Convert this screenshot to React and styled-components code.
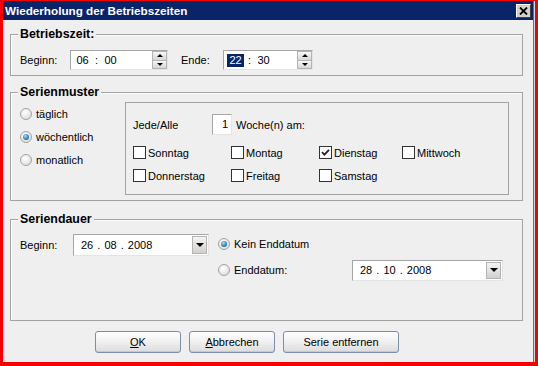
import React from "react";
import styled, { createGlobalStyle, css } from "styled-components";

const GlobalStyle = createGlobalStyle`
  html, body {
    margin: 0;
    padding: 0;
    background: #f40000;
  }
  body {
    width: 538px;
    height: 366px;
    overflow: hidden;
    font-family: "Liberation Sans", Arial, sans-serif;
    font-size: 11px;
    color: #000;
  }
`;

const Window = styled.div`
  box-sizing: border-box;
  margin: 1px 3px 0 3px;
  width: 532px;
  height: 361px;
  background: #efefef;
  box-shadow: inset -1px 0 0 #d8d8d8, inset -2px 0 0 #6f6f6f;
  display: flex;
  flex-direction: column;
`;

const TitleBar = styled.div`
  display: flex;
  align-items: center;
  justify-content: space-between;
  height: 19px;
  margin-right: 2px;
  padding: 0 2px 0 2px;
  background: #0a246a;
`;

const Title = styled.span`
  color: #fff;
  font-weight: bold;
  font-size: 11.7px;
`;

const CloseButton = styled.div`
  display: flex;
  align-items: center;
  justify-content: center;
  box-sizing: border-box;
  width: 15px;
  height: 14px;
  background: #d4d0c8;
  border: 1px solid;
  border-color: #fff #404040 #404040 #fff;
`;

const Body = styled.div`
  display: flex;
  flex-direction: column;
  padding: 14px 0 0 7px;
`;

const Group = styled.div`
  position: relative;
  box-sizing: border-box;
  width: 513px;
  height: ${(p) => p.$h}px;
  margin-top: ${(p) => p.$mt || 0}px;
  border: 1px solid #a3a3a3;
  box-shadow: inset 1px 1px 0 #fbfbfb;
  padding: ${(p) => p.$pad};
`;

const Legend = styled.span`
  position: absolute;
  top: -8px;
  left: 7px;
  padding: 0 2px;
  background: #efefef;
  font-weight: bold;
  font-size: 12.4px;
  line-height: 14px;
`;

const Row = styled.div`
  display: flex;
  align-items: center;
  height: ${(p) => p.$h || 20}px;
  margin-top: ${(p) => p.$mt || 0}px;
`;

const Label = styled.span`
  display: inline-block;
  width: ${(p) => p.$w}px;
  margin-left: ${(p) => p.$ml || 0}px;
  flex-shrink: 0;
  white-space: nowrap;
`;

const sunkenField = css`
  box-sizing: border-box;
  background: #fff;
  border: 1px solid;
  border-color: #a5a5a5 #e4e4e4 #e4e4e4 #a5a5a5;
`;

const TimeBox = styled.div`
  ${sunkenField};
  display: flex;
  align-items: center;
  width: ${(p) => p.$w}px;
  height: 20px;
  padding-left: 3px;
`;

const Segment = styled.span`
  display: inline-block;
  width: 17px;
  line-height: 13px;
  text-align: center;
  ${(p) =>
    p.$selected &&
    css`
      background: #0a246a;
      color: #fff;
    `}
`;

const Sep = styled.span`
  margin: 0 4px;
`;

const Spinner = styled.div`
  display: flex;
  flex-direction: column;
  margin-left: auto;
  width: 15px;
  height: 18px;
`;

const SpinButton = styled.div`
  flex: 1;
  display: flex;
  align-items: center;
  justify-content: center;
  box-sizing: border-box;
  border: 1px solid #b4b4b4;
  background: linear-gradient(#f7f7f7, #d6d6d6);
  & + & {
    border-top: none;
  }
`;

const Arrow = styled.span`
  width: 0;
  height: 0;
  border-left: 3px solid transparent;
  border-right: 3px solid transparent;
  ${(p) =>
    p.$up
      ? css`
          border-bottom: 3px solid #000;
        `
      : css`
          border-top: 3px solid #000;
        `}
`;

const PatternLayout = styled.div`
  display: flex;
`;

const RadioColumn = styled.div`
  display: flex;
  flex-direction: column;
  width: 105px;
`;

const RadioRow = styled.label`
  display: flex;
  align-items: center;
  gap: 4px;
  height: ${(p) => p.$h || 23}px;
  white-space: nowrap;
`;

const RadioDot = styled.span`
  position: relative;
  box-sizing: border-box;
  width: 12px;
  height: 12px;
  border-radius: 50%;
  border: 1px solid #a2a2a2;
  background: radial-gradient(circle at 40% 35%, #ffffff, #e9e9e9 55%, #cfcfcf);
  flex-shrink: 0;
  ${(p) =>
    p.$checked &&
    css`
      &::after {
        content: "";
        position: absolute;
        left: 2px;
        top: 2px;
        width: 6px;
        height: 6px;
        border-radius: 50%;
        background: radial-gradient(circle at 40% 35%, #a9dcf3, #2b7fb3 60%, #0e3f66);
      }
    `}
`;

const InnerBox = styled.div`
  box-sizing: border-box;
  width: 384px;
  height: 93px;
  border: 1px solid #a3a3a3;
  padding: 11px 0 0 7px;
`;

const CountBox = styled.div`
  ${sunkenField};
  width: 20px;
  height: 21px;
  line-height: 19px;
  text-align: right;
  padding-right: 3px;
`;

const DayGrid = styled.div`
  display: grid;
  grid-template-columns: 98px 88px 83px auto;
  grid-auto-rows: 23px;
  margin-top: 6px;
`;

const CheckRow = styled.label`
  display: flex;
  align-items: center;
  gap: 2px;
  white-space: nowrap;
`;

const CheckBox = styled.span`
  display: flex;
  align-items: center;
  justify-content: center;
  box-sizing: border-box;
  width: 13px;
  height: 13px;
  border: 1px solid #333;
  background: #fff;
  flex-shrink: 0;
`;

const DurationLayout = styled.div`
  display: flex;
  align-items: flex-start;
`;

const Combo = styled.div`
  ${sunkenField};
  display: flex;
  align-items: center;
  width: ${(p) => p.$w}px;
  height: ${(p) => p.$h || 22}px;
  padding-left: 7px;
  word-spacing: 1px;
  flex-shrink: 0;
`;

const ComboButton = styled.div`
  display: flex;
  align-items: center;
  justify-content: center;
  box-sizing: border-box;
  margin-left: auto;
  margin-right: 1px;
  width: 15px;
  height: calc(100% - 2px);
  border: 1px solid #b4b4b4;
  background: linear-gradient(#f4f4f4, #d2d0cc);
`;

const DownArrow = styled.span`
  width: 0;
  height: 0;
  border-left: 4px solid transparent;
  border-right: 4px solid transparent;
  border-top: 4px solid #000;
`;

const EndColumn = styled.div`
  display: flex;
  flex-direction: column;
  gap: 4px;
  margin-left: 9px;
  margin-top: -1px;
`;

const RadioText = styled.span`
  display: inline-block;
  width: ${(p) => (p.$w ? `${p.$w}px` : "auto")};
`;

const ButtonRow = styled.div`
  display: flex;
  gap: 8px;
  margin: 10px 0 0 85px;
`;

const Button = styled.button`
  box-sizing: border-box;
  width: ${(p) => p.$w}px;
  height: 22px;
  padding: 0;
  font: inherit;
  color: #000;
  border: 1px solid #7d8ea6;
  border-radius: 3px;
  background: linear-gradient(#ffffff, #f1f1f1 45%, #dcdcdc);
  box-shadow: inset 0 -1px 0 #c9c9c9;
`;

function TimeField({ width, hour, minute, selected }) {
  return (
    <TimeBox $w={width}>
      <Segment $selected={selected}>{hour}</Segment>
      <Sep>:</Sep>
      <Segment>{minute}</Segment>
      <Spinner>
        <SpinButton>
          <Arrow $up />
        </SpinButton>
        <SpinButton>
          <Arrow />
        </SpinButton>
      </Spinner>
    </TimeBox>
  );
}

function DateCombo({ width, height, value }) {
  return (
    <Combo $w={width} $h={height}>
      {value}
      <ComboButton>
        <DownArrow />
      </ComboButton>
    </Combo>
  );
}

function Day({ label, checked }) {
  return (
    <CheckRow>
      <CheckBox>
        {checked && (
          <svg width="9" height="9" viewBox="0 0 9 9">
            <path d="M1 4.2 L3.4 6.6 L8 1.8" fill="none" stroke="#222" strokeWidth="1.8" />
          </svg>
        )}
      </CheckBox>
      {label}
    </CheckRow>
  );
}

export default function App() {
  return (
    <>
      <GlobalStyle />
      <Window>
        <TitleBar>
          <Title>Wiederholung der Betriebszeiten</Title>
          <CloseButton>
            <svg width="9" height="8" viewBox="0 0 9 8">
              <path d="M1 0.5 L8 7.5 M8 0.5 L1 7.5" stroke="#000" strokeWidth="1.8" />
            </svg>
          </CloseButton>
        </TitleBar>
        <Body>
          <Group $h={42} $pad="15px 0 0 9px">
            <Legend>Betriebszeit:</Legend>
            <Row>
              <Label $w={50}>Beginn:</Label>
              <TimeField width={98} hour="06" minute="00" />
              <Label $w={42} $ml={13}>Ende:</Label>
              <TimeField width={90} hour="22" minute="30" selected />
            </Row>
          </Group>

          <Group $h={109} $mt={16} $pad="9px 0 0 9px">
            <Legend>Serienmuster</Legend>
            <PatternLayout>
              <RadioColumn>
                <RadioRow>
                  <RadioDot />
                  täglich
                </RadioRow>
                <RadioRow>
                  <RadioDot $checked />
                  wöchentlich
                </RadioRow>
                <RadioRow>
                  <RadioDot />
                  monatlich
                </RadioRow>
              </RadioColumn>
              <InnerBox>
                <Row $h={21}>
                  <Label $w={79}>Jede/Alle</Label>
                  <CountBox>1</CountBox>
                  <Label $ml={4}>Woche(n) am:</Label>
                </Row>
                <DayGrid>
                  <Day label="Sonntag" />
                  <Day label="Montag" />
                  <Day label="Dienstag" checked />
                  <Day label="Mittwoch" />
                  <Day label="Donnerstag" />
                  <Day label="Freitag" />
                  <Day label="Samstag" />
                </DayGrid>
              </InnerBox>
            </PatternLayout>
          </Group>

          <Group $h={102} $mt={18} $pad="14px 0 0 9px">
            <Legend>Seriendauer</Legend>
            <DurationLayout>
              <Row $h={22}>
                <Label $w={53}>Beginn:</Label>
                <DateCombo width={136} value="26 . 08 . 2008" />
              </Row>
              <EndColumn>
                <RadioRow $h={22}>
                  <RadioDot $checked />
                  Kein Enddatum
                </RadioRow>
                <RadioRow $h={22}>
                  <RadioDot />
                  <RadioText $w={114}>Enddatum:</RadioText>
                  <DateCombo width={151} height={21} value="28 . 10 . 2008" />
                </RadioRow>
              </EndColumn>
            </DurationLayout>
          </Group>

          <ButtonRow>
            <Button $w={86}>
              <u>O</u>K
            </Button>
            <Button $w={86}>
              <u>A</u>bbrechen
            </Button>
            <Button $w={116}>Serie entfernen</Button>
          </ButtonRow>
        </Body>
      </Window>
    </>
  );
}
